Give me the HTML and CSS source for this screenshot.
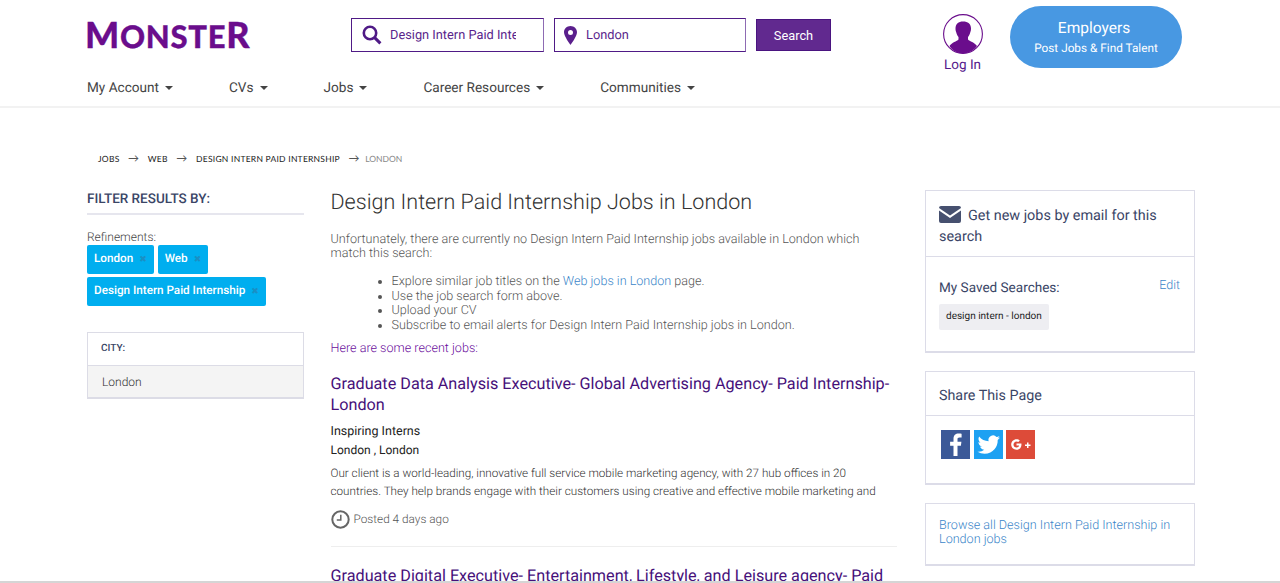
FILE: index.html
```html
<!DOCTYPE html>
<html lang="en">
<head>
<meta charset="utf-8">
<title>Design Intern Paid Internship Jobs in London</title>
<link rel="stylesheet" href="styles.css">
</head>
<body>
<header class="site-header">
  <div class="top-row">
    <a class="logo"><span class="logo-cap">M</span>ONSTE<span class="logo-cap">R</span></a>
    <form class="search-form">
      <label class="field field-q">
        <svg class="field-icon" width="20" height="20" viewBox="0 0 20 20"><circle cx="8" cy="8" r="6.2" fill="none" stroke="#4f1a86" stroke-width="2.6"/><path d="M12.6 12.6 18.4 18.4" stroke="#4f1a86" stroke-width="3" fill="none"/></svg>
        <span class="field-text">Design Intern Paid Inte</span>
      </label>
      <label class="field field-loc">
        <svg class="field-icon" width="13" height="19" viewBox="0 0 13 19"><path fill-rule="evenodd" d="M6.5 0C2.9 0 0 2.8 0 6.3 0 10.5 6.500 19 6.500 19S13 10.500 13 6.300C13 2.800 10.100 0 6.500 0Zm0 3.900a2.500 2.500 0 1 1 0 5 2.500 2.500 0 0 1 0-5Z" fill="#5a1f8c"/></svg>
        <span class="field-text">London</span>
      </label>
      <button class="search-btn" type="button">Search</button>
    </form>
    <a class="login">
      <svg class="avatar" width="40" height="40" viewBox="0 0 40 40"><circle cx="20" cy="20" r="19.400" fill="#fff" stroke="#6a0d8c" stroke-width="1.100"/><path d="M20 7.500c-4.500 0-7.500 2.500-7.500 7 0 1.500.2 2.500.7 3.800.4 1.800 1.200 3.500 2.300 4.700v2.500c-1.700 2-6.500 2.700-9 6.600C9.500 36.900 14.500 39.500 20 39.500s10.500-2.600 14-7.400c-2.500-3.900-7.300-4.600-9-6.600V23c1.100-1.200 1.900-2.900 2.300-4.700.5-1.300.7-2.300.7-3.800 0-4.500-3-7-8-7Z" fill="#6a0d8c"/></svg>
      <span class="login-text">Log In</span>
    </a>
    <a class="employers">
      <span class="emp-title">Employers</span>
      <span class="emp-sub">Post Jobs &amp; Find Talent</span>
    </a>
  </div>
  <nav class="main-nav">
    <a class="nav-item">My Account<i class="caret"></i></a>
    <a class="nav-item">CVs<i class="caret"></i></a>
    <a class="nav-item">Jobs<i class="caret"></i></a>
    <a class="nav-item">Career Resources<i class="caret"></i></a>
    <a class="nav-item">Communities<i class="caret"></i></a>
  </nav>
</header>

<div class="crumbs">
  <a>JOBS</a><span class="arrow">→</span><a>WEB</a><span class="arrow">→</span><a>DESIGN INTERN PAID INTERNSHIP</a><span class="arrow">→</span><span class="crumb-last">LONDON</span>
</div>

<main class="layout">
  <aside class="left-col">
    <h3 class="filter-title">FILTER RESULTS BY:</h3>
    <div class="refine-label">Refinements:</div>
    <div class="tags">
      <span class="tag">London<i class="tag-x">✖</i></span>
      <span class="tag">Web<i class="tag-x">✖</i></span>
      <span class="tag">Design Intern Paid Internship<i class="tag-x">✖</i></span>
    </div>
    <div class="city-box">
      <div class="city-head">CITY:</div>
      <div class="city-item">London</div>
    </div>
  </aside>

  <section class="mid-col">
    <h1 class="page-title">Design Intern Paid Internship Jobs in London</h1>
    <p class="sorry">Unfortunately, there are currently no Design Intern Paid Internship jobs available in London which match this search:</p>
    <ul class="suggest">
      <li>Explore similar job titles on the <a class="link">Web jobs in London</a> page.</li>
      <li>Use the job search form above.</li>
      <li>Upload your CV</li>
      <li>Subscribe to email alerts for Design Intern Paid Internship jobs in London.</li>
    </ul>
    <p class="recent">Here are some recent jobs:</p>
    <article class="job">
      <h2 class="job-title">Graduate Data Analysis Executive- Global Advertising Agency- Paid Internship- London</h2>
      <div class="job-company">Inspiring Interns</div>
      <div class="job-loc">London , London</div>
      <p class="job-desc">Our client is a world-leading, innovative full service mobile marketing agency, with 27 hub offices in 20 countries. They help brands engage with their customers using creative and effective mobile marketing and</p>
      <div class="job-posted">
        <svg width="19" height="19" viewBox="0 0 19 19"><circle cx="9.500" cy="9.500" r="8.200" fill="none" stroke="#666" stroke-width="2"/><path d="M9.800 4.800v5.200H5.800" fill="none" stroke="#666" stroke-width="1.500"/></svg>
        <span>Posted 4 days ago</span>
      </div>
    </article>
    <article class="job">
      <h2 class="job-title job-title-next">Graduate Digital Executive- Entertainment, Lifestyle, and Leisure agency- Paid Internship</h2>
    </article>
  </section>

  <aside class="right-col">
    <div class="card">
      <div class="card-head email-head">
        <svg class="mail" width="22" height="17" viewBox="0 0 22 17"><path d="M2 0h18a2 2 0 0 1 2 2L11 9.500 0 2a2 2 0 0 1 2-2Z" fill="#46506f"/><path d="M0 4.500 11 12 22 4.500V15a2 2 0 0 1-2 2H2a2 2 0 0 1-2-2Z" fill="#46506f"/></svg>Get new jobs by email for this search
      </div>
      <div class="saved">
        <div class="saved-row"><span class="saved-label">My Saved Searches:</span><a class="link edit">Edit</a></div>
        <span class="chip">design intern - london</span>
      </div>
    </div>
    <div class="card">
      <div class="card-head share-head">Share This Page</div>
      <div class="share">
        <a class="soc soc-f"><svg width="29" height="29" viewBox="0 0 29 29"><path d="M16.500 26V15.800h3.400l.5-4h-3.900V9.300c0-1.200.3-1.900 2-1.900h2.100V3.800c-.4 0-1.600-.2-3-.2-3 0-5.100 1.800-5.100 5.200v3H9.100v4h3.400V26Z" fill="#fff"/></svg></a>
        <a class="soc soc-t"><svg width="29" height="29" viewBox="0 0 29 29"><path d="M26 7.600c-.8.400-1.700.6-2.600.8.900-.6 1.700-1.500 2-2.500-.9.500-1.900.9-2.900 1.100a4.600 4.600 0 0 0-7.900 4.200C10.800 11 7.400 9.200 5.100 6.400c-1.200 2.100-.6 4.800 1.400 6.100-.7 0-1.400-.2-2.100-.6 0 2.200 1.600 4.100 3.700 4.600-.7.200-1.400.2-2.100.1.600 1.900 2.300 3.200 4.300 3.200A9.300 9.300 0 0 1 3.500 21.700a13 13 0 0 0 7.100 2.100c8.600 0 13.400-7.200 13.100-13.700.9-.7 1.700-1.500 2.300-2.500Z" fill="#fff"/></svg></a>
        <a class="soc soc-g"><svg width="29" height="29" viewBox="0 0 29 29"><path d="M10.500 9.300c1.400 0 2.500.5 3.300 1.300l-1.500 1.500c-.5-.4-1.100-.7-1.800-.7-1.700 0-3 1.400-3 3.100s1.300 3.100 3 3.100c1.500 0 2.400-.9 2.600-2h-2.600v-2h4.900c.3 2.800-1 6.100-4.900 6.100-2.900 0-5.300-2.300-5.300-5.200s2.400-5.200 5.300-5.200Z" fill="#fff"/><path d="M21 12.500h1.500v2H24.500V16H22.500v2H21v-2H19v-1.500h2Z" fill="#fff"/></svg></a>
      </div>
    </div>
    <div class="card browse">
      <a class="link">Browse all Design Intern Paid Internship in London jobs</a>
    </div>
  </aside>
</main>
<div class="window-edge"></div>
</body>
</html>
```
FILE: styles.css
```css
* { box-sizing: border-box; }
html, body { height: 100%; }
body {
  margin: 0;
  height: 583px;
  overflow: hidden;
  background: #fff;
  font-family: Roboto, "Liberation Sans", sans-serif;
  color: #333;
  text-rendering: geometricPrecision;
}
a { text-decoration: none; color: inherit; }

.site-header {
  height: 108px;
  border-bottom: 2px solid #f2f2f2;
  padding: 6px 0 0 87px;
}
.top-row { display: flex; align-items: flex-start; height: 62px; }
.logo {
  width: 264px;
  margin-top: 12px;
  text-indent: -2px;
  font-family: Lato, sans-serif;
  font-weight: 900;
  font-size: 31px;
  line-height: 32px;
  letter-spacing: .7px;
  color: #6a0d8c;
  -webkit-text-stroke: .3px #6a0d8c;
}
.logo-cap { font-size: 36px; }
.search-form { display: flex; align-items: flex-start; gap: 10px; margin-top: 12px; width: 480px; }
.field {
  height: 34px;
  border: 1px solid #4f1a86;
  border-right-color: #8e6bb3;
  display: flex;
  align-items: center;
  font-size: 12.800px;
  color: #5a1f8c;
  overflow: hidden;
  white-space: nowrap;
}
.field-q { width: 193px; padding-left: 10px; }
.field-loc { width: 192px; padding-left: 9px; }
.field-icon { flex: none; }
.field-q .field-text { margin-left: 8px; width: 126px; overflow: hidden; }
.field-loc .field-text { margin-left: 9px; }
.search-btn {
  width: 75px;
  height: 32px;
  margin-top: 1px;
  border: 1px solid #4a1480;
  background: #61298f;
  color: #fff;
  font: 12.800px Roboto, sans-serif;
  padding: 0;
}
.login {
  width: 39px;
  margin: 8px 0 0 112px;
  display: flex;
  flex-direction: column;
  align-items: center;
  color: #55198b;
  font-size: 13.500px;
}
.avatar { flex: none; display: block; }
.login-text { margin-top: 2px; white-space: nowrap; line-height: 18px; }
.employers {
  width: 172px;
  height: 62px;
  margin-left: 28px;
  border-radius: 31px;
  background: #4898e2;
  color: #fff;
  display: flex;
  flex-direction: column;
  align-items: center;
  padding-top: 13px;
}
.emp-title { font-size: 15.500px; line-height: 19px; padding-right: 4px; }
.emp-sub { font-size: 11.800px; line-height: 15px; margin-top: 3px; }

.main-nav { display: flex; gap: 56px; margin-top: 11px; font-size: 13.600px; line-height: 18px; color: #444; }
.nav-item { display: flex; align-items: center; white-space: nowrap; }
.caret {
  width: 0; height: 0;
  margin-left: 6px;
  border-left: 4.500px solid transparent;
  border-right: 4.500px solid transparent;
  border-top: 4.500px solid #444;
}

.crumbs {
  margin: 44px 0 0 98px;
  font-family: Lato, sans-serif;
  font-size: 8.500px;
  line-height: 14px;
  color: #222;
  display: flex;
  align-items: center;
  letter-spacing: .25px;
}
.arrow { margin: 0 8.500px; font-size: 11px; color: #555; }
.crumb-last { color: #888; margin-left: -3px; letter-spacing: 0; }

.layout { display: flex; align-items: flex-start; margin: 24px 0 0 87px; }
.left-col { width: 217px; flex: none; }
.filter-title {
  margin: 0;
  font-size: 13.500px;
  line-height: 17px;
  font-weight: 500;
  color: #3a4566;
  padding-top: 1px;
  padding-bottom: 5px;
  border-bottom: 2px solid #e6e6ee;
}
.refine-label { margin-top: 15px; font-size: 12px; line-height: 15px; color: #444; font-weight: 300; }
.tags { display: flex; flex-wrap: wrap; gap: 3px 4px; }
.tag {
  height: 29px;
  padding: 0 7px;
  border-radius: 2px;
  background: #00aeef;
  color: #fff;
  font-size: 11.700px;
  font-weight: 500;
  line-height: 26px;
  white-space: nowrap;
}
.tag-x { font-style: normal; font-size: 9px; color: #1a8fc4; margin-left: 6px; font-family: "DejaVu Sans", sans-serif; }
.city-box { margin-top: 26px; border: 1px solid #dcdce6; border-width: 1px 1px 2px; }
.city-head {
  height: 33px;
  padding-left: 13px;
  font-size: 10px;
  font-weight: 500;
  line-height: 32px;
  color: #3a4566;
  border-bottom: 1px solid #dcdce6;
}
.city-item { height: 31px; padding-left: 14px; font-size: 12px; font-weight: 300; line-height: 32px; background: #f4f4f4; color: #333; }

.mid-col { width: 566.500px; margin-left: 26.500px; flex: none; }
.page-title { margin: -1px 0 0; font-size: 21.550px; line-height: 27px; font-weight: 300; color: #333; }
.sorry { margin: 17px 0 0; padding-right: 20px; font-size: 12.600px; line-height: 14px; font-weight: 300; color: #555; }
.suggest { margin: 14px 0 0; padding-left: 61px; font-size: 12.600px; line-height: 14.500px; font-weight: 300; color: #555; }
.link { color: #3b86c9; }
.recent { margin: 8px 0 0; font-size: 12.600px; line-height: 15px; font-weight: 300; color: #6a0d9c; }
.job-title { margin: 18px 0 0; font-size: 16.200px; line-height: 20.500px; font-weight: 400; color: #46107a; }
.job-title-next { margin-top: 19px; }
.job-company { margin-top: 8.500px; font-size: 12.500px; line-height: 15px; color: #222; }
.job-loc { margin-top: 4px; font-size: 12px; line-height: 15px; color: #222; }
.job-desc { margin: 6px 0 0; font-size: 11.700px; line-height: 18px; font-weight: 300; color: #333; }
.job-posted {
  display: flex;
  align-items: center;
  gap: 4px;
  margin-top: 10px;
  padding-bottom: 17px;
  border-bottom: 1px solid #eee;
  font-size: 11.800px;
  font-weight: 300;
  color: #555;
}

.right-col { width: 270px; margin-left: 28px; flex: none; display: flex; flex-direction: column; gap: 18px; }
.card { border: 1px solid #dcdce8; border-width: 1px 1px 2px; }
.card-head {
  font-size: 14px;
  line-height: 21px;
  color: #3a4566;
  border-bottom: 1px solid #dcdce8;
  font-weight: 400;
}
.email-head { padding: 14px 13px 0; height: 66px; font-size: 14.400px; }
.share-head { padding: 14px 13px 0; height: 44px; font-size: 14.300px; }
.mail { vertical-align: -3px; margin-right: 7px; }
.saved { padding: 22px 14px 0 13px; height: 94px; }
.saved-row { display: flex; justify-content: space-between; align-items: flex-start; font-size: 13.550px; line-height: 18px; color: #3a4566; }
.edit { font-size: 12.500px; line-height: 14px; font-weight: 300; }
.chip {
  display: inline-block;
  margin-top: 7px;
  padding: 0 7px;
  height: 26px;
  line-height: 25px;
  background: #eeeef2;
  border-radius: 2px;
  font-size: 10px;
  color: #222;
}
.share { height: 67px; padding: 14px 0 0 15px; display: flex; gap: 3.500px; align-items: flex-start; }
.soc { width: 29px; height: 29px; display: block; }
.soc svg { display: block; }
.soc-f { background: #3b5998; }
.soc-t { background: #1da1f2; }
.soc-g { background: #dd4b39; }
.browse { padding: 15px 13px 0; height: 63px; font-size: 12.600px; line-height: 14px; font-weight: 300; }
.window-edge { position: fixed; left: 0; right: 0; bottom: 0; height: 2px; background: #d5d5d5; }
```
